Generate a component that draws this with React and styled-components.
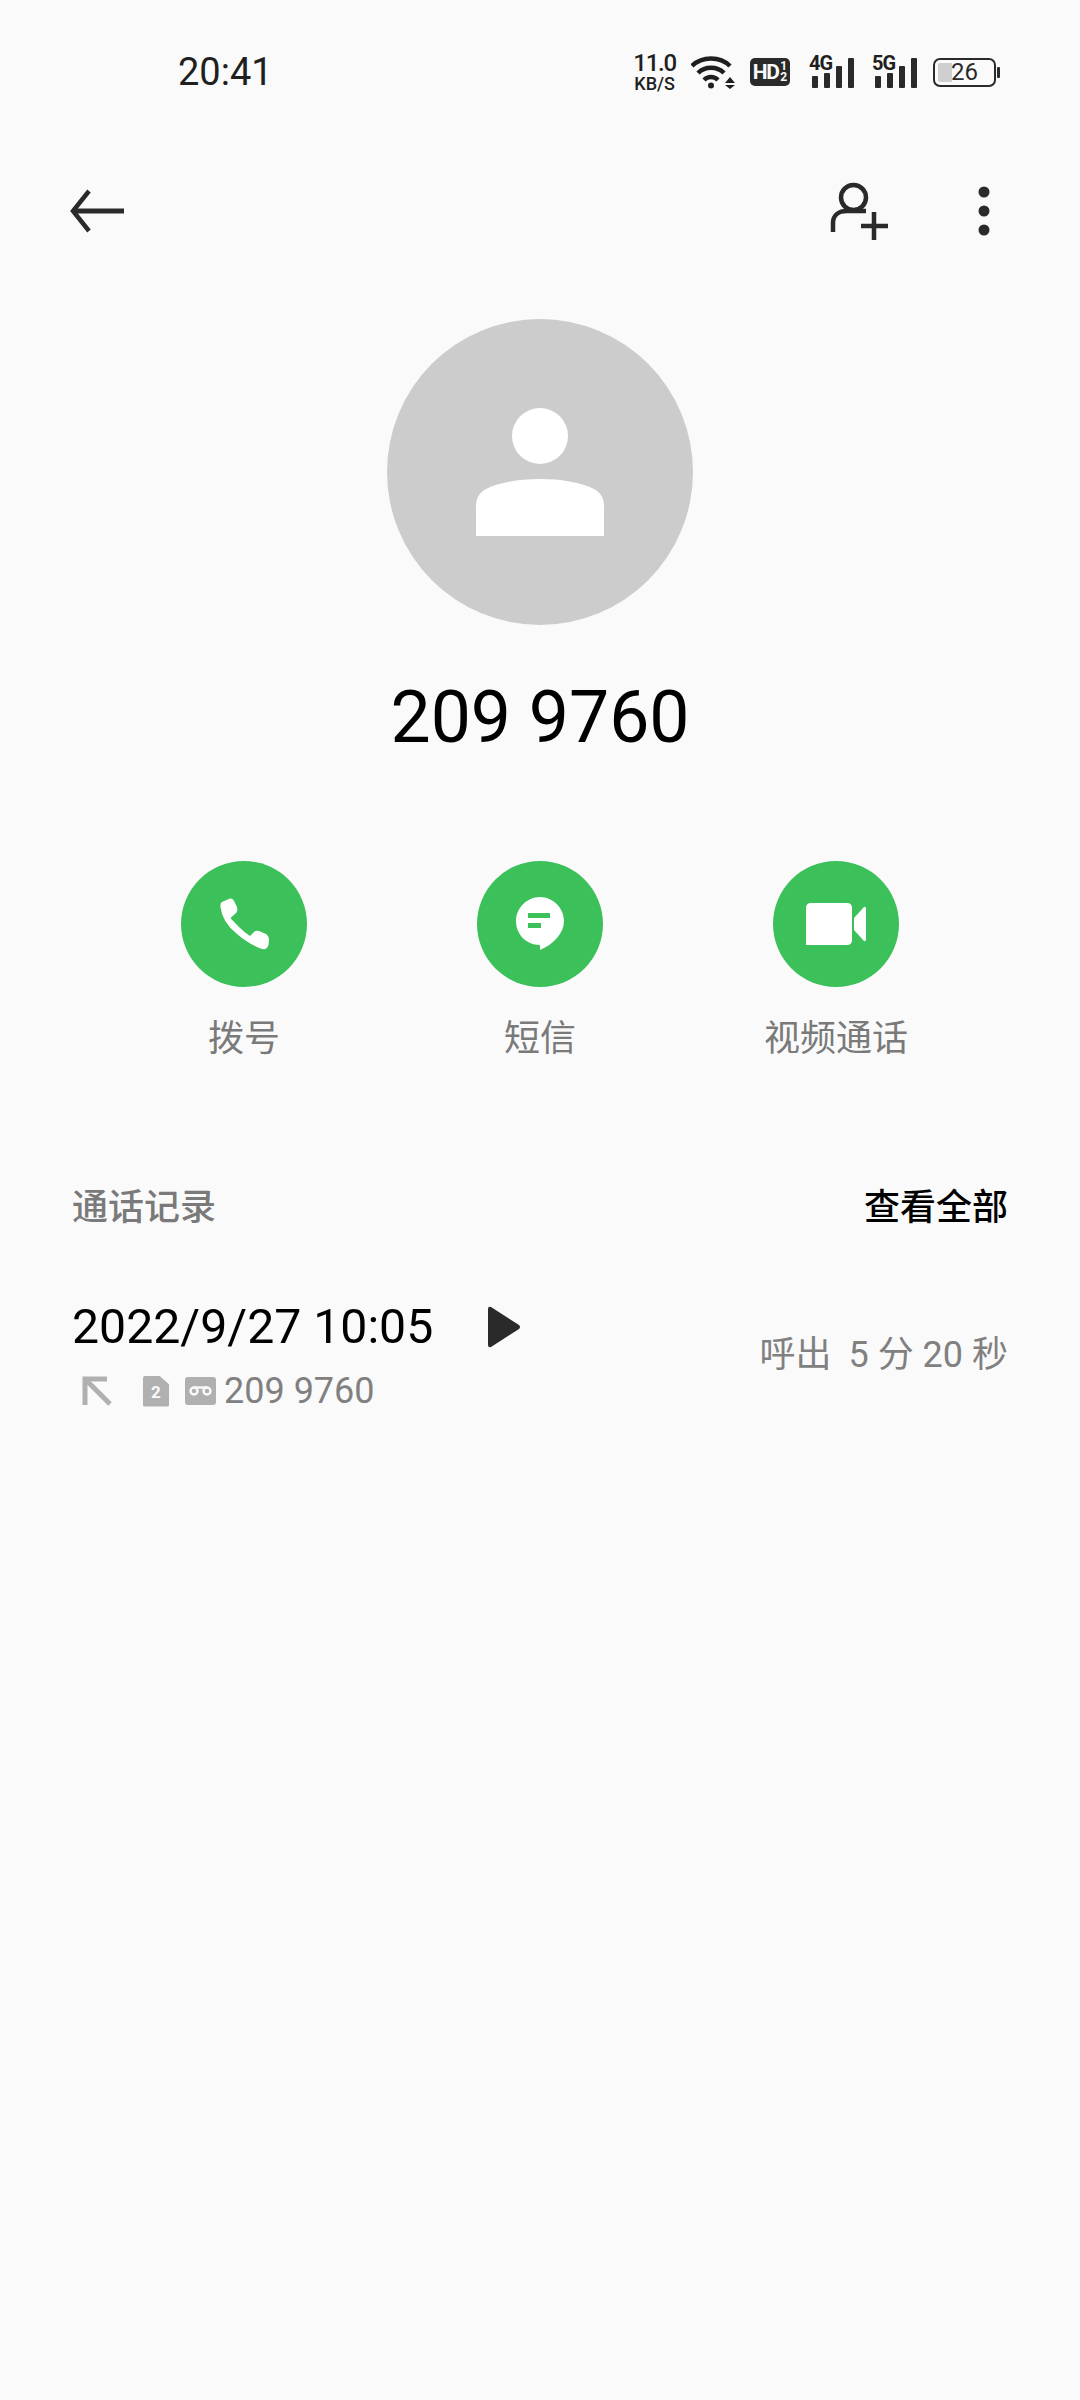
import React from 'react';
import styled, {createGlobalStyle} from 'styled-components';

const GlobalStyle = createGlobalStyle`
  html, body {
    margin: 0;
    padding: 0;
    background: #fafafa;
  }
  * {
    box-sizing: border-box;
  }
`;

const Page = styled.div`
  width: 1080px;
  height: 2400px;
  overflow: hidden;
  background: #fafafa;
  font-family: Roboto, "Noto Sans CJK SC", sans-serif;
`;

const StatusBar = styled.div`
  height: 144px;
  padding: 0 84px 0 178px;
  display: flex;
  align-items: center;
  justify-content: space-between;
  color: #1f1f1f;
`;

const Clock = styled.div`
  font-size: 38px;
  line-height: 44px;
`;

const StatusIcons = styled.div`
  display: flex;
  align-items: center;
  gap: 15px;
`;

const Speed = styled.div`
  display: flex;
  flex-direction: column;
  align-items: center;
  font-weight: 500;
`;

const SpeedValue = styled.span`
  font-size: 24px;
  line-height: 22px;
  letter-spacing: -1.2px;
`;

const SpeedUnit = styled.span`
  font-size: 18px;
  line-height: 19px;
`;

const HdBadge = styled.div`
  width: 40px;
  height: 28px;
  margin-right: 4px;
  border-radius: 5px;
  background: #2a2a2a;
  color: #fafafa;
  display: flex;
  align-items: center;
  justify-content: center;
  gap: 1px;
  font-weight: 700;
`;

const HdText = styled.span`
  font-size: 21px;
  letter-spacing: -1.5px;
  margin-right: 1px;
`;

const HdSims = styled.span`
  display: flex;
  flex-direction: column;
  font-size: 12px;
  line-height: 11px;
`;

const Signal = styled.div`
  position: relative;
  width: 45px;
  height: 32px;
  display: flex;
  align-items: flex-end;
  justify-content: flex-end;
  gap: 6px;

  & + & {
    margin-left: 3px;
  }
`;

const SignalLabel = styled.span`
  position: absolute;
  left: 0;
  top: -3px;
  font-size: 20px;
  line-height: 20px;
  font-weight: 700;
  letter-spacing: -1px;
`;

const SignalBar = styled.span`
  width: 6px;
  height: ${props => props.$h}px;
  background: #2a2a2a;
  border-radius: 1px;
`;

const Battery = styled.div`
  position: relative;
  width: 63px;
  height: 29px;
  margin-left: 1px;
  border: 2px solid #2a2a2a;
  border-radius: 7px;
  padding-left: 3px;
  display: flex;
  align-items: center;

  &::after {
    content: '';
    position: absolute;
    right: -6px;
    top: 7px;
    width: 3px;
    height: 11px;
    border-radius: 1px;
    background: #2a2a2a;
  }
`;

const BatteryFill = styled.span`
  width: 14px;
  height: 19px;
  background: #cfcfcf;
  border-radius: 2px 0 0 2px;
`;

const BatteryText = styled.span`
  position: absolute;
  left: 16px;
  top: 0;
  font-size: 24px;
  line-height: 25px;
  color: #2a2a2a;
`;

const Toolbar = styled.div`
  height: 134px;
  padding: 0 90px 0 69px;
  display: flex;
  align-items: center;
  justify-content: space-between;
`;

const ToolbarRight = styled.div`
  display: flex;
  align-items: center;
  gap: 90px;
`;

const Profile = styled.div`
  margin-top: 41px;
  display: flex;
  flex-direction: column;
  align-items: center;
`;

const Avatar = styled.div`
  width: 306px;
  height: 306px;
  border-radius: 50%;
  background: #cccccc;
  display: flex;
  align-items: center;
  justify-content: center;
`;

const Name = styled.div`
  margin-top: 50px;
  font-size: 71.5px;
  line-height: 86px;
  color: #000;
`;

const Actions = styled.div`
  margin-top: 100px;
  display: grid;
  grid-template-columns: repeat(3, 296px);
  justify-content: center;
`;

const Action = styled.div`
  display: flex;
  flex-direction: column;
  align-items: center;
`;

const ActionCircle = styled.div`
  width: 126px;
  height: 126px;
  border-radius: 50%;
  background: #3bc05a;
  display: flex;
  align-items: center;
  justify-content: center;
`;

const ActionLabel = styled.div`
  margin-top: 27px;
  font-size: 36px;
  line-height: 50px;
  color: #7a7a7a;
`;

const SectionHeader = styled.div`
  margin-top: 119px;
  padding: 0 72px;
  display: flex;
  align-items: center;
  justify-content: space-between;
  font-size: 36px;
  line-height: 50px;
`;

const SectionTitle = styled.div`
  color: #7a7a7a;
  font-weight: 500;
`;

const SectionLink = styled.div`
  color: #000;
  font-weight: 500;
`;

const CallRow = styled.div`
  margin-top: 64px;
  padding: 0 72px;
  display: flex;
  align-items: center;
  justify-content: space-between;
`;

const CallInfo = styled.div`
  display: flex;
  flex-direction: column;
`;

const CallTime = styled.div`
  display: flex;
  align-items: center;
  gap: 54px;
  font-size: 48.2px;
  line-height: 60px;
  color: #000;
`;

const CallMeta = styled.div`
  margin-top: 12px;
  display: flex;
  align-items: center;
  font-size: 36px;
  line-height: 44px;
  color: #808080;
`;

const CallIcons = styled.div`
  width: 152px;
  padding-left: 10px;
  display: flex;
  align-items: center;
  flex-shrink: 0;
`;

const SimIcon = styled.div`
  width: 26px;
  height: 31px;
  margin: 0 16px 0 31px;
  flex-shrink: 0;
  background: #b0b0b0;
  border-radius: 2px;
  clip-path: polygon(0 0, 62% 0, 100% 28%, 100% 100%, 0 100%);
  color: #fafafa;
  font-size: 17px;
  font-weight: 700;
  line-height: 33px;
  text-align: center;
`;

const CallSummary = styled.div`
  display: flex;
  gap: 17px;
  font-size: 36px;
  line-height: 44px;
  color: #808080;
`;

const BackIcon = () => (
  <svg width="55" height="44" viewBox="0 0 55 44" fill="none" stroke="#2a2a2a" strokeWidth="4.5">
    <path d="M55 22H4" strokeWidth="5" />
    <path d="M20 2L4 22L20 42" />
  </svg>
);

const AddContactIcon = () => (
  <svg width="60" height="58" viewBox="0 0 60 58" fill="none" stroke="#2a2a2a" strokeWidth="4.5">
    <circle cx="25.5" cy="15.5" r="12.5" />
    <path d="M5 50V41C5 33 11 29 19 29H38" />
    <path d="M46 30V58M33 44H60" />
  </svg>
);

const MoreIcon = () => (
  <svg width="12" height="50" viewBox="0 0 12 50" fill="#2a2a2a">
    <circle cx="6" cy="6" r="5.5" />
    <circle cx="6" cy="25" r="5.5" />
    <circle cx="6" cy="44" r="5.5" />
  </svg>
);

const PersonIcon = () => (
  <svg width="128" height="128" viewBox="0 0 128 128" fill="#fff">
    <circle cx="64" cy="28" r="28" />
    <path d="M0 128V99C0 90 3 85 10 81C24 74 44 71 64 71C84 71 104 74 118 81C125 85 128 90 128 99V128Z" />
  </svg>
);

const PhoneIcon = () => (
  <svg width="50" height="52" viewBox="0 0 50 52" fill="#fff">
    <path d="M3 4Q1 5 1.5 9Q3 24 18 36Q31 47 43 51Q48 52 49.5 47L50 42Q50 38 47 36L40 33Q37 32 35 34L31 38Q26 35 20 29Q14 23 11.5 20L17 15Q19 13 18 9L15 3Q14 0 11 0.5Z" />
  </svg>
);

const MessageIcon = () => (
  <svg width="48" height="54" viewBox="0 0 48 54">
    <path
      fill="#fff"
      d="M24 0C37 0 48 11 48 24C48 36 38 47 24 53V48C10 48 0 37 0 24C0 11 11 0 24 0Z"
    />
    <rect x="12" y="16" width="22" height="5" fill="#3bc05a" />
    <rect x="12" y="26" width="13" height="5" fill="#3bc05a" />
  </svg>
);

const VideoIcon = () => (
  <svg width="60" height="42" viewBox="0 0 60 42" fill="#fff">
    <path d="M0 5Q0 0 5 0H41Q46 0 46 5V37Q46 42 41 42H0Z" />
    <path d="M48 15L58 4Q60 3 60 6V36Q60 39 58 38L48 27Z" />
  </svg>
);

const PlayIcon = () => (
  <svg width="34" height="42" viewBox="0 0 34 42" fill="#2a2a2a">
    <path d="M1 3Q1 0 4 1L32 19Q34 21 32 23L4 41Q1 42 1 39Z" />
  </svg>
);

const OutgoingIcon = () => (
  <svg width="30" height="30" viewBox="0 0 30 30" fill="none" stroke="#b0b0b0" strokeWidth="5" style={{flexShrink: 0}}>
    <path d="M3 29V3H25" />
    <path d="M3 3L28 28" />
  </svg>
);

const VoicemailIcon = () => (
  <svg width="31" height="28" viewBox="0 0 31 28" style={{flexShrink: 0}}>
    <rect width="31" height="28" rx="3" fill="#b0b0b0" />
    <circle cx="9" cy="14" r="3.5" fill="none" stroke="#fafafa" strokeWidth="2.4" />
    <circle cx="22" cy="14" r="3.5" fill="none" stroke="#fafafa" strokeWidth="2.4" />
    <path d="M9 10.5H22" stroke="#fafafa" strokeWidth="2.4" />
  </svg>
);

const WifiIcon = () => (
  <svg width="44" height="34" viewBox="0 0 44 34" fill="none" stroke="#1f1f1f" strokeWidth="4.5">
    <path d="M1 11C11 1 29 1 39 11" />
    <path d="M7 18C14 11 26 11 33 18" />
    <path d="M13 25C17 21 23 21 27 25" />
    <circle cx="20" cy="30.5" r="3" fill="#1f1f1f" stroke="none" />
    <path d="M34 28L39 22L44 28ZM34 30L39 34L44 30Z" fill="#1f1f1f" stroke="none" />
  </svg>
);

const MobileSignal = ({label}) => (
  <Signal>
    <SignalLabel>{label}</SignalLabel>
    <SignalBar $h={12} />
    <SignalBar $h={15} />
    <SignalBar $h={22} />
    <SignalBar $h={30} />
  </Signal>
);

const ACTIONS = [
  {label: '拨号', Icon: PhoneIcon},
  {label: '短信', Icon: MessageIcon},
  {label: '视频通话', Icon: VideoIcon}
];

const App = () => (
  <Page>
    <GlobalStyle />
    <StatusBar>
      <Clock>20:41</Clock>
      <StatusIcons>
        <Speed>
          <SpeedValue>11.0</SpeedValue>
          <SpeedUnit>KB/S</SpeedUnit>
        </Speed>
        <WifiIcon />
        <HdBadge>
          <HdText>HD</HdText>
          <HdSims>
            <span>1</span>
            <span>2</span>
          </HdSims>
        </HdBadge>
        <MobileSignal label="4G" />
        <MobileSignal label="5G" />
        <Battery>
          <BatteryFill />
          <BatteryText>26</BatteryText>
        </Battery>
      </StatusIcons>
    </StatusBar>
    <Toolbar>
      <BackIcon />
      <ToolbarRight>
        <AddContactIcon />
        <MoreIcon />
      </ToolbarRight>
    </Toolbar>
    <Profile>
      <Avatar>
        <PersonIcon />
      </Avatar>
      <Name>209 9760</Name>
    </Profile>
    <Actions>
      {ACTIONS.map(({label, Icon}) => (
        <Action key={label}>
          <ActionCircle>
            <Icon />
          </ActionCircle>
          <ActionLabel>{label}</ActionLabel>
        </Action>
      ))}
    </Actions>
    <SectionHeader>
      <SectionTitle>通话记录</SectionTitle>
      <SectionLink>查看全部</SectionLink>
    </SectionHeader>
    <CallRow>
      <CallInfo>
        <CallTime>
          2022/9/27 10:05
          <PlayIcon />
        </CallTime>
        <CallMeta>
          <CallIcons>
            <OutgoingIcon />
            <SimIcon>2</SimIcon>
            <VoicemailIcon />
          </CallIcons>
          209 9760
        </CallMeta>
      </CallInfo>
      <CallSummary>
        <span>呼出</span>
        <span>5 分 20 秒</span>
      </CallSummary>
    </CallRow>
  </Page>
);

export default App;
